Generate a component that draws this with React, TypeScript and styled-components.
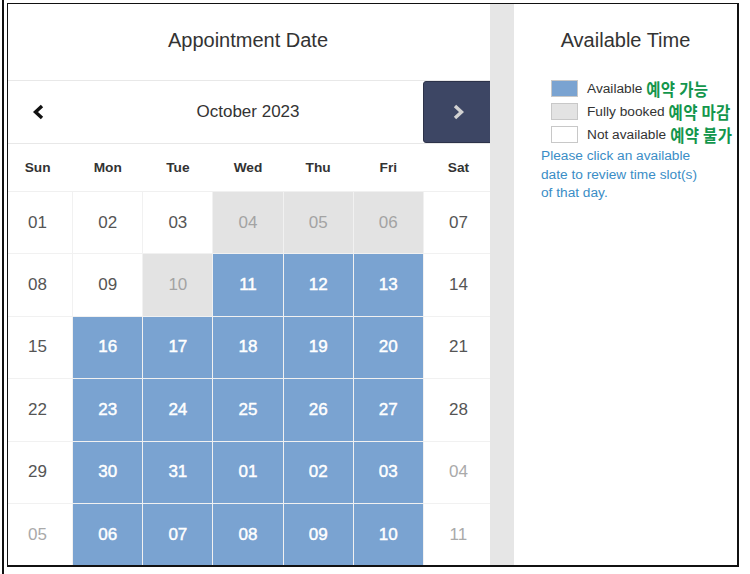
import styled, { createGlobalStyle } from 'styled-components'

const GlobalStyle = createGlobalStyle`
  html, body {
    margin: 0;
    padding: 0;
    background: #ffffff;
    font-family: "Liberation Sans", Arial, sans-serif;
  }
`

type DayKind = 'open' | 'booked' | 'free' | 'off'

const weekdays = ['Sun', 'Mon', 'Tue', 'Wed', 'Thu', 'Fri', 'Sat']

// o = open (blue), b = fully booked, f = free / not available, x = other month
const weeks: [string, string][][] = [
  [['01', 'f'], ['02', 'f'], ['03', 'f'], ['04', 'b'], ['05', 'b'], ['06', 'b'], ['07', 'f']],
  [['08', 'f'], ['09', 'f'], ['10', 'b'], ['11', 'o'], ['12', 'o'], ['13', 'o'], ['14', 'f']],
  [['15', 'f'], ['16', 'o'], ['17', 'o'], ['18', 'o'], ['19', 'o'], ['20', 'o'], ['21', 'f']],
  [['22', 'f'], ['23', 'o'], ['24', 'o'], ['25', 'o'], ['26', 'o'], ['27', 'o'], ['28', 'f']],
  [['29', 'f'], ['30', 'o'], ['31', 'o'], ['01', 'o'], ['02', 'o'], ['03', 'o'], ['04', 'x']],
  [['05', 'x'], ['06', 'o'], ['07', 'o'], ['08', 'o'], ['09', 'o'], ['10', 'o'], ['11', 'x']],
]

const kindOf: Record<string, DayKind> = { o: 'open', b: 'booked', f: 'free', x: 'off' }

const Page = styled.div`
  width: 750px;
  height: 574px;
  padding-left: 2px;
  box-sizing: border-box;
  overflow: hidden;
`

const Edge = styled.div`
  height: 100%;
  border-left: 2px solid #111;
  padding: 3px 0 0 3px;
  box-sizing: border-box;
`

const Frame = styled.div`
  width: 732px;
  height: 564px;
  box-sizing: border-box;
  border: 1px solid #111;
  border-right-width: 2px;
  border-bottom-width: 2px;
  display: flex;
  overflow: hidden;
`

const CalendarPanel = styled.div`
  width: 482px;
  flex-shrink: 0;
  overflow: hidden;
`

const CalendarInner = styled.div`
  width: 490px;
  margin-left: -5px;
`

const PanelTitle = styled.div<{ $line?: boolean }>`
  height: 77px;
  display: flex;
  align-items: center;
  justify-content: center;
  padding-bottom: 3px;
  box-sizing: border-box;
  font-size: 20px;
  color: #333;
  border-bottom: 1px solid ${(p) => (p.$line ? '#e8e8e8' : 'transparent')};
`

const MonthNav = styled.div`
  height: 62px;
  display: grid;
  grid-template-columns: 70px 1fr 70px;
  border-bottom: 1px solid #e8e8e8;
`

const NavButton = styled.button<{ $dark?: boolean }>`
  border: 1px solid ${(p) => (p.$dark ? '#2c3249' : 'transparent')};
  border-radius: 3px;
  background: ${(p) => (p.$dark ? '#3d4664' : 'transparent')};
  color: ${(p) => (p.$dark ? '#d2d2d2' : '#111')};
  display: flex;
  align-items: center;
  justify-content: center;
  padding: 0;
  margin: 0;
`

const MonthLabel = styled.div`
  display: flex;
  align-items: center;
  justify-content: center;
  font-size: 17px;
  color: #333;
`

const WeekRow = styled.div`
  height: 47px;
  display: grid;
  grid-template-columns: repeat(7, 1fr);
  column-gap: 1px;
  border-bottom: 1px solid #f0f0f0;
`

const WeekDay = styled.div`
  display: flex;
  align-items: center;
  justify-content: center;
  font-size: 13.7px;
  font-weight: bold;
  color: #333;
`

const DayGrid = styled.div`
  display: grid;
  grid-template-columns: repeat(7, 1fr);
  grid-auto-rows: 61.4px;
  gap: 1px;
  background: #f1f1f1;
`

const dayBg: Record<DayKind, string> = {
  open: '#7aa3d1',
  booked: '#e3e3e3',
  free: '#ffffff',
  off: '#ffffff',
}

const dayColor: Record<DayKind, string> = {
  open: '#ffffff',
  booked: '#a3a3a3',
  free: '#555555',
  off: '#aaaaaa',
}

const Day = styled.div<{ $kind: DayKind }>`
  display: flex;
  align-items: center;
  justify-content: center;
  font-size: 17px;
  background: ${(p) => dayBg[p.$kind]};
  color: ${(p) => dayColor[p.$kind]};
  -webkit-text-stroke: ${(p) => (p.$kind === 'open' ? '0.45px #ffffff' : '0')};
`

const Divider = styled.div`
  width: 24px;
  flex-shrink: 0;
  background: #e6e6e6;
`

const TimePanel = styled.div`
  flex: 1;
  min-width: 0;
`

const Legend = styled.div`
  margin-top: -1px;
  padding-left: 37px;
  display: flex;
  flex-direction: column;
  gap: 6px;
`

const LegendRow = styled.div`
  height: 17px;
  display: flex;
  align-items: center;
  white-space: nowrap;
  font-size: 13.7px;
  color: #333;
`

const Swatch = styled.span<{ $color: string }>`
  width: 27px;
  height: 17px;
  box-sizing: border-box;
  border: 1px solid #c8c8c8;
  background: ${(p) => p.$color};
  margin-right: 9px;
  flex-shrink: 0;
`

const Note = styled.span`
  display: inline-block;
  margin-left: 4px;
  font-family: "Noto Sans CJK KR", sans-serif;
  font-weight: bold;
  font-size: 15.5px;
  line-height: 17px;
  letter-spacing: 0.3px;
  color: #13964c;
  transform: scaleY(1.12);
`

const Help = styled.p`
  margin: 4px 0 0 27px;
  width: 168px;
  font-size: 13.7px;
  line-height: 18.5px;
  color: #3a8dc6;
`

const Chevron = ({ dir }: { dir: 'left' | 'right' }) => (
  <svg width="13" height="16" viewBox="0 0 13 16">
    <polyline
      points={dir === 'left' ? '10,2 3.5,8 10,14' : '3,2 9.5,8 3,14'}
      fill="none"
      stroke="currentColor"
      strokeWidth="3.4"
    />
  </svg>
)

export default function App() {
  return (
    <Page>
      <GlobalStyle />
      <Edge>
        <Frame>
          <CalendarPanel>
            <CalendarInner>
              <PanelTitle $line>Appointment Date</PanelTitle>
              <MonthNav>
                <NavButton>
                  <Chevron dir="left" />
                </NavButton>
                <MonthLabel>October 2023</MonthLabel>
                <NavButton $dark>
                  <Chevron dir="right" />
                </NavButton>
              </MonthNav>
              <WeekRow>
                {weekdays.map((d) => (
                  <WeekDay key={d}>{d}</WeekDay>
                ))}
              </WeekRow>
              <DayGrid>
                {weeks.flat().map(([n, k], i) => (
                  <Day key={i} $kind={kindOf[k]}>
                    {n}
                  </Day>
                ))}
              </DayGrid>
            </CalendarInner>
          </CalendarPanel>
          <Divider />
          <TimePanel>
            <PanelTitle>Available Time</PanelTitle>
            <Legend>
              <LegendRow>
                <Swatch $color="#7aa3d1" />
                Available<Note>예약 가능</Note>
              </LegendRow>
              <LegendRow>
                <Swatch $color="#e3e3e3" />
                Fully booked<Note>예약 마감</Note>
              </LegendRow>
              <LegendRow>
                <Swatch $color="#ffffff" />
                Not available<Note>예약 불가</Note>
              </LegendRow>
            </Legend>
            <Help>Please click an available date to review time slot(s) of that day.</Help>
          </TimePanel>
        </Frame>
      </Edge>
    </Page>
  )
}
